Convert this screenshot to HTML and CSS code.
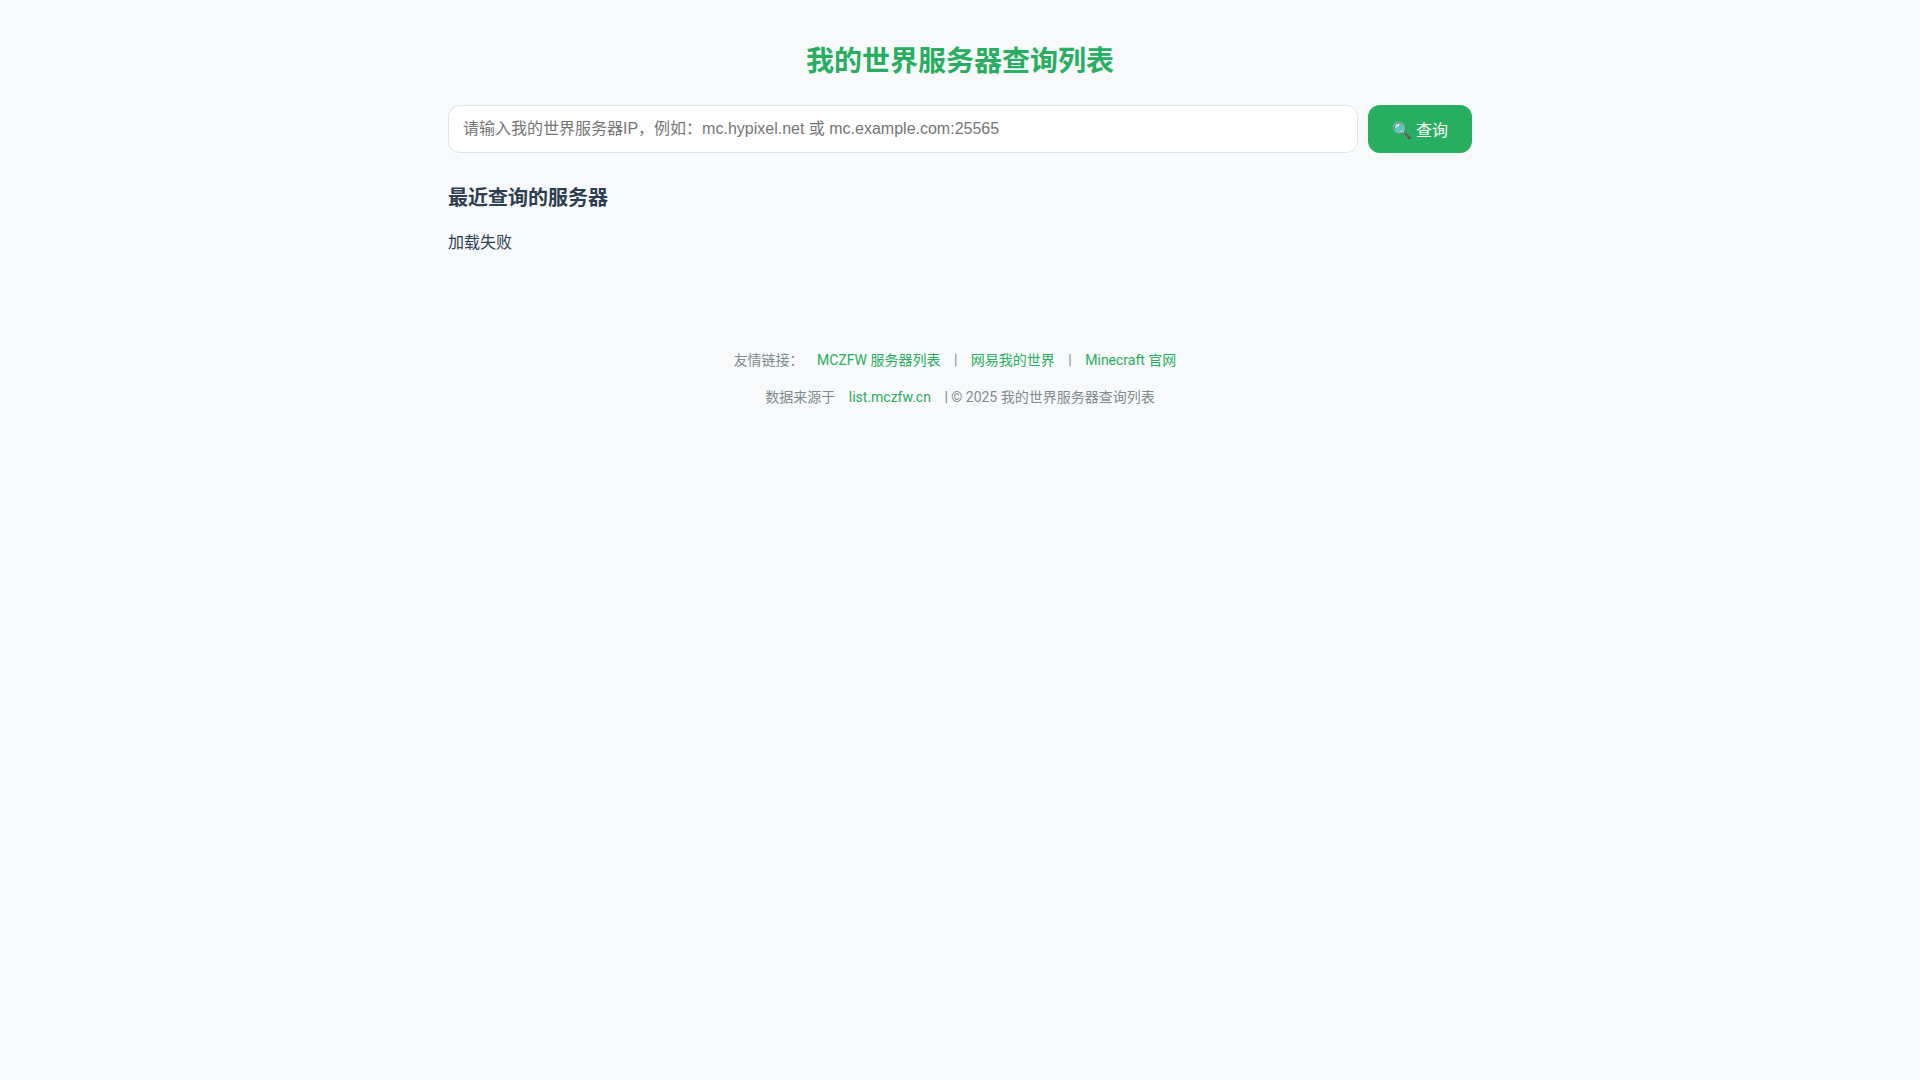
FILE: index.html
```html
<!DOCTYPE html>
<html lang="zh-CN">
<head>
    <meta charset="UTF-8">
    <meta name="viewport" content="width=device-width, initial-scale=1.0">
    <title>我的世界服务器查询列表</title>
    <link rel="stylesheet" href="styles.css">
</head>
<body>
    <div class="container">
        <h1 class="page-title">我的世界服务器查询列表</h1>
        <div class="search-box">
            <input class="search-input" type="text" placeholder="请输入我的世界服务器IP，例如：mc.hypixel.net 或 mc.example.com:25565">
            <button class="search-btn">🔍 查询</button>
        </div>
        <h2 class="recent-title">最近查询的服务器</h2>
        <div class="recent-list">加载失败</div>
        <footer class="footer">
            <p class="footer-line">
                友情链接：
                <a href="#">MCZFW 服务器列表</a>
                <span>|</span>
                <a href="#">网易我的世界</a>
                <span>|</span>
                <a href="#">Minecraft 官网</a>
            </p>
            <p class="footer-line">
                数据来源于
                <a href="#">list.mczfw.cn</a>
                | © 2025 我的世界服务器查询列表
            </p>
        </footer>
    </div>
</body>
</html>
```

FILE: styles.css
```css
* {
    margin: 0;
    padding: 0;
    box-sizing: border-box;
}

body {
    background-color: #f8f9fa;
    color: #2c3e50;
    font-family: Roboto, "Noto Sans CJK SC", sans-serif;
    line-height: 1.6;
    min-height: 100vh;
}

.container {
    width: 1024px;
    margin: 0 auto;
    padding: 39px 0 0;
}

.page-title {
    color: #27ae60;
    font-size: 28px;
    font-weight: 700;
    line-height: normal;
    text-align: center;
    margin-bottom: 26px;
}

.search-box {
    display: flex;
    gap: 10px;
    margin-bottom: 29px;
}

.search-input {
    flex: 1;
    height: 48px;
    padding: 0 14px;
    border: 1px solid #dfe4ea;
    border-radius: 12px;
    background: white;
    font-family: "Liberation Sans", "Noto Sans CJK SC", sans-serif;
    font-size: 16px;
}

.search-btn {
    width: 104px;
    height: 48px;
    background: #27ae60;
    color: white;
    border: none;
    border-radius: 12px;
    font-family: Roboto, "Noto Sans CJK SC", sans-serif;
    font-size: 16px;
}

.recent-title {
    font-size: 20px;
    font-weight: 700;
    line-height: normal;
    margin-bottom: 19px;
}

.recent-list {
    font-size: 16px;
}

.footer {
    margin-top: 93px;
    text-align: center;
    color: #7f8c8d;
    font-size: 14px;
}

.footer-line {
    margin-bottom: 15px;
}

.footer a {
    color: #27ae60;
    text-decoration: none;
    margin: 0 10px;
}
```
